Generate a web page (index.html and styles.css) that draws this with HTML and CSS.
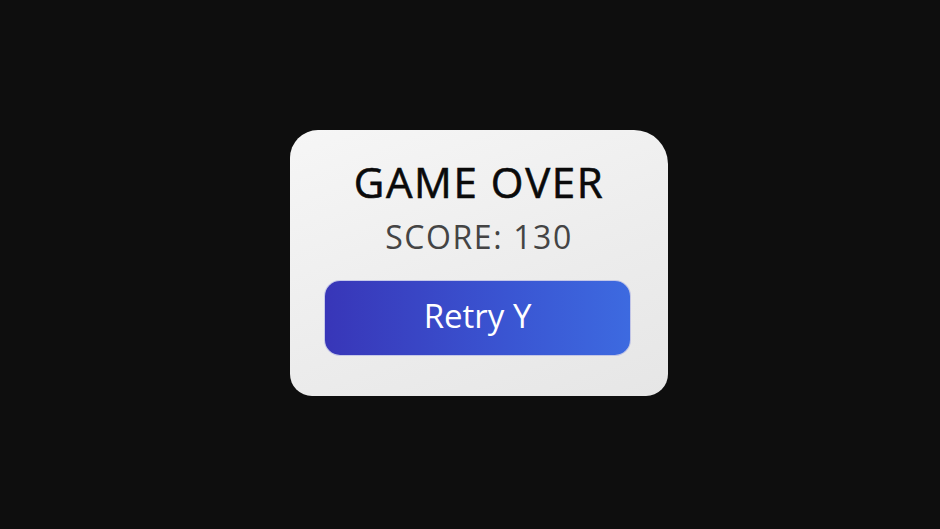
FILE: index.html
```html
<!DOCTYPE html>
<html>
<head>
<meta charset="utf-8">
<link rel="stylesheet" href="styles.css">
</head>
<body>
<div class="stage">
  <div class="card">
    <h1 class="title">GAME OVER</h1>
    <p class="score">SCORE: 130</p>
    <button class="retry">Retry Y</button>
  </div>
</div>
</body>
</html>
```
FILE: styles.css
```css
html, body {
  margin: 0;
  padding: 0;
  height: 100%;
  background: #0e0e0e;
}
.stage {
  height: 100%;
  display: flex;
  align-items: center;
  justify-content: center;
  padding-left: 18px;
  padding-bottom: 4px;
  box-sizing: border-box;
}
.card {
  width: 378px;
  height: 266px;
  box-sizing: border-box;
  border-radius: 28px 34px 22px 22px;
  background: linear-gradient(160deg, #f6f6f6 0%, #ececec 60%, #e6e6e6 100%);
  display: flex;
  flex-direction: column;
  align-items: center;
  padding-top: 27px;
  font-family: "Open Sans", "Noto Sans", sans-serif;
}
.title {
  margin: 0;
  font-size: 42px;
  font-weight: 400;
  color: #0a0a0a;
  line-height: 50px;
  letter-spacing: 1.6px;
  -webkit-text-stroke: 0.6px #0a0a0a;
}
.score {
  margin: 10px 0 0 0;
  font-size: 32px;
  font-weight: 400;
  color: #444444;
  line-height: 40px;
  letter-spacing: 1.6px;
}
.retry {
  margin: 24px 0 0 -3px;
  width: 305px;
  height: 74px;
  border: none;
  border-radius: 15px;
  background: linear-gradient(90deg, #3836b8 0%, #3a55d2 60%, #3d6ae0 100%);
  color: #ffffff;
  font-family: "Open Sans", "Noto Sans", sans-serif;
  font-size: 33px;
  font-weight: 400;
  padding: 0 0 4px 0;
  box-shadow: 0 0 0 1px rgba(80, 90, 220, 0.25);
}
```
